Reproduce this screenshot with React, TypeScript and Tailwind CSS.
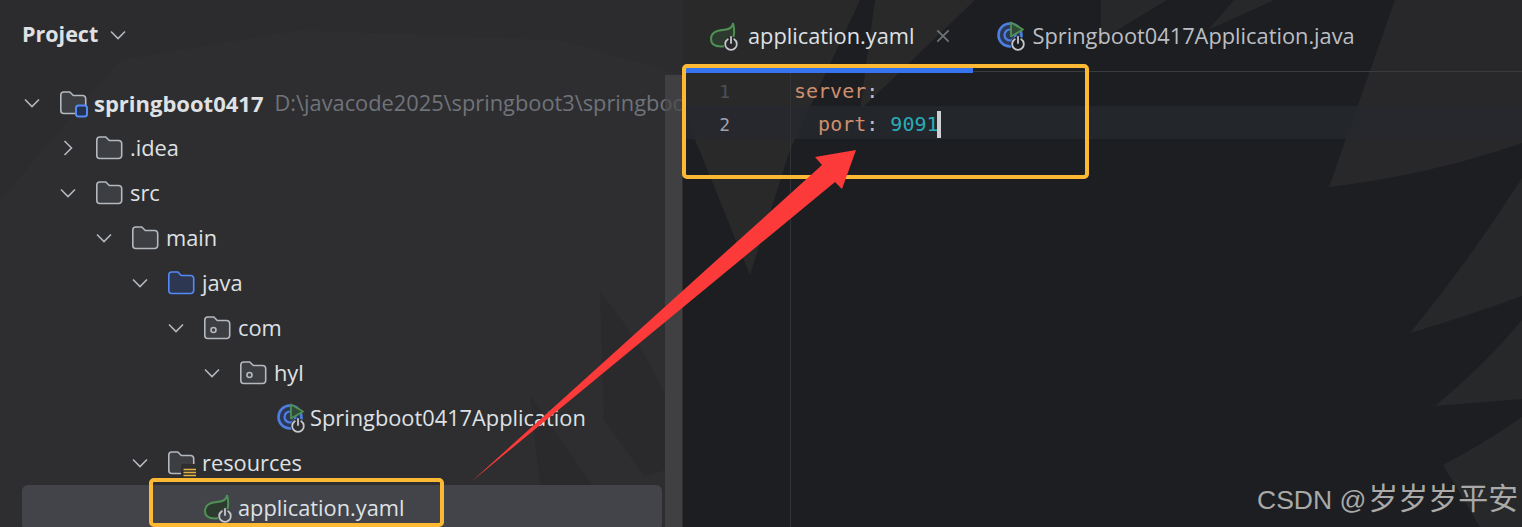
import React from "react";

const ui = { fontFamily: '"Open Sans", "Noto Sans", sans-serif' };
const mono = { fontFamily: '"DejaVu Sans Mono", monospace' };

function Chevron({ dir }: { dir: "down" | "right" }) {
  return (
    <svg width="16" height="16" viewBox="0 0 16 16" fill="none" stroke="#b4b8bf" strokeWidth="1.6">
      {dir === "down" ? <path d="M1 4.500 L8 11.500 L15 4.500" /> : <path d="M4.500 1 L11.500 8 L4.500 15" />}
    </svg>
  );
}

function Folder({ variant }: { variant?: "plain" | "java" | "pkg" | "module" | "res" }) {
  const stroke = variant === "java" ? "#548af7" : "#b4b8bf";
  const fill = variant === "java" ? "#2d3752" : "#3d3e42";
  return (
    <svg width="28" height="26" viewBox="0 0 28 26" fill="none" className="overflow-visible">
      <path
        d="M0.800 5 a3 3 0 0 1 3-3 h6 l3.500 3.500 h9.400 a3 3 0 0 1 3 3 v12 a3 3 0 0 1-3 3 h-18.900 a3 3 0 0 1-3-3 z"
        fill={fill}
        stroke={stroke}
        strokeWidth="1.600"
      />
      {variant === "pkg" && <circle cx="9.500" cy="15" r="2.500" stroke="#b4b8bf" strokeWidth="1.600" />}
      {variant === "module" && (
        <rect x="16" y="15.500" width="11" height="11" rx="2.500" fill="#25324d" stroke="#548af7" strokeWidth="2" />
      )}
      {variant === "res" && (
        <g>
          <rect x="13" y="14" width="15" height="13" rx="2" fill="#2e2e30" />
          <path d="M15.500 19.500 h12.500 M15.500 22.500 h12.500 M15.500 25.500 h12.500" stroke="#e3b341" strokeWidth="1.700" />
        </g>
      )}
    </svg>
  );
}

function Power({ cx, cy, bg }: { cx: number; cy: number; bg: string }) {
  return (
    <g fill="none" stroke="#c4c7cc" strokeWidth="1.800" strokeLinecap="round">
      <circle cx={cx} cy={cy} r="7.500" fill={bg} stroke="none" />
      <path d={`M${cx - 3.2} ${cy - 4.8} a5.800 5.800 0 1 0 6.400 0`} />
      <path d={`M${cx} ${cy - 7} v6`} />
    </g>
  );
}

function Spring({ bg }: { bg: string }) {
  return (
    <svg width="28" height="30" viewBox="0 0 28 30" fill="none" className="overflow-visible">
      <path
        d="M23 2 C23 7 19 8.500 13 9 C5 9.500 1 13 1 18 C1 23 5 25.500 11 25.500 C20 25.500 27 17 23 2 Z"
        fill="#2d3a2f"
        stroke="#4f9155"
        strokeWidth="2"
      />
      <Power cx={21} cy={23} bg={bg} />
    </svg>
  );
}

function AppIcon({ bg }: { bg: string }) {
  return (
    <svg width="30" height="30" viewBox="0 0 30 30" fill="none" className="overflow-visible">
      <circle cx="14" cy="14" r="11.500" fill="#2c3857" stroke="#4d7fe0" strokeWidth="2.600" />
      <circle cx="14" cy="14" r="5.500" stroke="#4d7fe0" strokeWidth="2.200" />
      <path d="M15 1.500 L27 8.500 L15 15.500 Z" fill="#2f4a36" stroke="#4f9155" strokeWidth="1.800" strokeLinejoin="round" />
      <Power cx={22} cy={23} bg={bg} />
    </svg>
  );
}

type Row = { pad: number; chev?: "down" | "right"; icon: React.ReactNode; label: string; bold?: boolean; note?: string; selected?: boolean };

const rows: Row[] = [
  { pad: 24, chev: "down", icon: <Folder variant="module" />, label: "springboot0417", bold: true, note: "D:\\javacode2025\\springboot3\\springboot0417" },
  { pad: 60, chev: "right", icon: <Folder />, label: ".idea" },
  { pad: 60, chev: "down", icon: <Folder />, label: "src" },
  { pad: 96, chev: "down", icon: <Folder />, label: "main" },
  { pad: 132, chev: "down", icon: <Folder variant="java" />, label: "java" },
  { pad: 168, chev: "down", icon: <Folder variant="pkg" />, label: "com" },
  { pad: 204, chev: "down", icon: <Folder variant="pkg" />, label: "hyl" },
  { pad: 240, icon: <AppIcon bg="#2e2e30" />, label: "Springboot0417Application" },
  { pad: 132, chev: "down", icon: <Folder variant="res" />, label: "resources" },
  { pad: 168, icon: <Spring bg="#434449" />, label: "application.yaml", selected: true },
];

function TreeRow({ r }: { r: Row }) {
  return (
    <div
      className={`h-[45px] shrink-0 flex items-center whitespace-nowrap rounded-md ${r.selected ? "bg-[#434449]" : ""}`}
      style={{ paddingLeft: r.pad - 22 }}
    >
      <span className="w-[36px] shrink-0 flex items-center">{r.chev && <Chevron dir={r.chev} />}</span>
      <span className="w-[34px] shrink-0 flex items-center">{r.icon}</span>
      <span className={`pt-[2px] text-[#dfe1e5] ${r.bold ? "font-bold text-[22px]" : "text-[21.800px]"}`}>{r.label}</span>
      {r.note && <span className="pt-[2px] ml-[11px] text-[21.800px] text-[#6f737a]">{r.note}</span>}
    </div>
  );
}

export default function App() {
  return (
    <div className="relative w-[1522px] h-[527px] overflow-hidden flex bg-[#1d1e21]" style={ui}>
      <svg className="absolute inset-0" width="1522" height="527" viewBox="0 0 1522 527">
        <rect x="0" y="0" width="683" height="527" fill="#2e2e30" />
        <path d="M0 0 H683 V75 L560 40 L300 30 L120 60 L0 200 Z" fill="#2c2c2e" />
        <path d="M600 292 Q640 340 665 395 V470 L645 477 L604 420 Z" fill="#2a2a2c" />
        <path d="M530 395 L592 485 H540 Z" fill="#2a2a2c" />
        <path d="M1101 0 V40 L1167 0 Z" fill="#27282a" />
        <path d="M1208 30 L1274 0 H1234 Z" fill="#27282a" />
        <path d="M1395 0 L1329 187 Q1430 175 1522 143 V0 Z" fill="#28282a" />
        <path d="M1522 178 Q1470 260 1410 333 Q1470 315 1522 296 Z" fill="#27282a" />
        <path d="M1435 406 Q1485 365 1522 320 V399 Z" fill="#27282a" />
        <path d="M1443 465 Q1485 443 1522 417 V527 H1480 Z" fill="#27282a" />
        <path d="M683 0 H860 L790 150 L750 275 L683 110 Z" fill="#29292a" />
        <path d="M875 0 H975 L860 110 Z" fill="#29292a" />
      </svg>

      <div className="relative w-[683px] shrink-0 flex overflow-hidden">
        <div className="w-[665px] shrink-0 flex flex-col pl-[22px] pr-[3px]">
          <div className="h-[80px] shrink-0 flex items-start pt-[19px] gap-[12px]">
            <span className="text-[21.500px] leading-[29px] font-bold text-[#dfe1e5]">Project</span>
            <span className="mt-[8px]"><Chevron dir="down" /></span>
          </div>
          <div className="flex flex-col">
            {rows.map((r) => (
              <TreeRow key={r.label} r={r} />
            ))}
          </div>
        </div>
        <div className="w-[17px] shrink-0 mt-[75px] bg-[#48484a]/70" />
      </div>

      <div className="relative flex-1 flex flex-col">
        <div className="h-[72px] shrink-0 flex border-b border-[#3a3b3e]">
          <div className="flex items-center pl-[27px]">
            <Spring bg="#27282a" />
            <span className="pt-[2px] ml-[10px] text-[21.800px] text-[#dfe1e5]">application.yaml</span>
            <svg className="ml-[21px]" width="14" height="14" viewBox="0 0 16 16" stroke="#6f737a" strokeWidth="2">
              <path d="M1.500 1.500 L14.500 14.500 M14.500 1.500 L1.500 14.500" />
            </svg>
          </div>
          <div className="flex items-center pl-[46px]">
            <AppIcon bg="#1d1e21" />
            <span className="pt-[2px] ml-[7px] text-[21.800px] text-[#bcbec4]">Springboot0417Application.java</span>
          </div>
        </div>
        <div className="relative h-[5px] w-[290px] -mt-[4px] shrink-0 bg-[#3574f0]" />
        <div className="flex-1 flex text-[20px] leading-[29px]" style={mono}>
          <div className="w-[108px] shrink-0 border-r border-[#313236] text-[18px]">
            <div className="h-[33px] pt-[4px] pr-[60px] text-right text-[#4b5059]">1</div>
            <div className="h-[33px] pt-[4px] pr-[60px] text-right text-[#a1a3ab] bg-[#26282e]/80">2</div>
          </div>
          <div className="flex-1">
            <div className="h-[33px] pt-[4px] pl-[3px] text-[#cf8e6d] whitespace-pre">
              server<span className="text-[#bcbec4]">:</span>
            </div>
            <div className="h-[33px] pl-[3px] bg-[#26282e]/80 whitespace-pre text-[#cf8e6d] flex items-center">
              <span className="pt-[3px]">{"  "}port<span className="text-[#bcbec4]">: </span><span className="text-[#2aacb8]">9091</span></span>
              <span className="w-[4px] h-[27px] -ml-[2px] mt-[3px] bg-[#ced0d6]" />
            </div>
          </div>
        </div>
      </div>

      <div className="absolute left-[682px] top-[64px] w-[407px] h-[115px] border-[4px] border-[#fdb933] rounded-[5px]" />
      <div className="absolute left-[149px] top-[478px] w-[295px] h-[49px] border-[4px] border-[#fdb933] rounded-[5px]" />
      <svg className="absolute left-0 top-0 pointer-events-none" width="1522" height="527" viewBox="0 0 1522 527">
        <path d="M471 482 L822 165 L815 157 L856 150 L842 189 L835 182 Z" fill="#fd3a3a" />
      </svg>
      <div
        className="absolute left-[1257px] top-[480px] text-[26.500px] leading-[38px] text-[#a9a9a9] whitespace-nowrap"
        style={{ fontFamily: '"Liberation Sans", "Noto Sans CJK SC", sans-serif' }}
      >
        CSDN @<span className="ml-[2px] text-[30px]">岁岁岁平安</span>
      </div>
    </div>
  );
}
